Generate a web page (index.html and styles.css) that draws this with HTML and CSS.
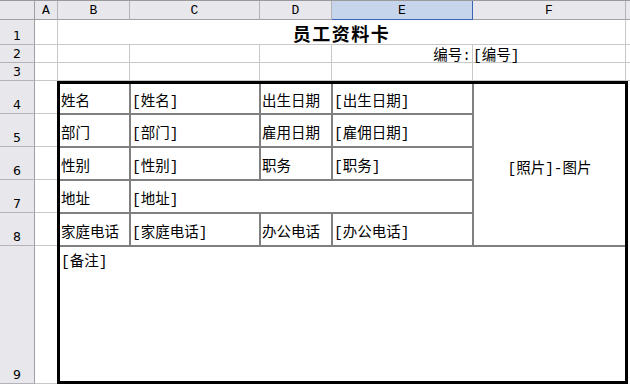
FILE: index.html
```html
<!DOCTYPE html>
<html lang="zh-CN">
<head>
<meta charset="utf-8">
<title>员工资料卡</title>
<link rel="stylesheet" href="styles.css">
</head>
<body>
<div class="sheet">
  <div class="corner"></div>
  <div class="colh">A</div>
  <div class="colh">B</div>
  <div class="colh">C</div>
  <div class="colh">D</div>
  <div class="colh sel">E</div>
  <div class="colh">F</div>
  <div class="colh last"></div>

  <div class="rowh">1</div>
  <div class="cell"></div>
  <div class="cell title">员工资料卡</div>
  <div class="cell edge"></div>

  <div class="rowh">2</div>
  <div class="cell"></div>
  <div class="cell"></div>
  <div class="cell"></div>
  <div class="cell"></div>
  <div class="cell right">编号:</div>
  <div class="cell left">[编号]</div>
  <div class="cell edge"></div>

  <div class="rowh">3</div>
  <div class="cell"></div>
  <div class="cell"></div>
  <div class="cell"></div>
  <div class="cell"></div>
  <div class="cell"></div>
  <div class="cell"></div>
  <div class="cell edge"></div>

  <div class="rowh r4">4</div>
  <div class="rowh r5">5</div>
  <div class="rowh r6">6</div>
  <div class="rowh r7">7</div>
  <div class="rowh r8">8</div>
  <div class="rowh r9">9</div>
  <div class="cell cola r4"></div>
  <div class="cell cola r5"></div>
  <div class="cell cola r6"></div>
  <div class="cell cola r7"></div>
  <div class="cell cola r8"></div>
  <div class="cell cola r9"></div>

  <div class="card">
    <div class="fc">姓名</div>
    <div class="fc">[姓名]</div>
    <div class="fc">出生日期</div>
    <div class="fc">[出生日期]</div>
    <div class="fc photo">[照片]-图片</div>

    <div class="fc">部门</div>
    <div class="fc">[部门]</div>
    <div class="fc">雇用日期</div>
    <div class="fc">[雇佣日期]</div>

    <div class="fc">性别</div>
    <div class="fc">[性别]</div>
    <div class="fc">职务</div>
    <div class="fc">[职务]</div>

    <div class="fc">地址</div>
    <div class="fc addr">[地址]</div>

    <div class="fc">家庭电话</div>
    <div class="fc">[家庭电话]</div>
    <div class="fc">办公电话</div>
    <div class="fc">[办公电话]</div>

    <div class="fc note">[备注]</div>
  </div>
</div>
</body>
</html>
```

FILE: styles.css
```css
* { box-sizing: border-box; }
html, body { margin: 0; padding: 0; background: #ffffff; }
body {
  font-family: "Liberation Mono", "Noto Sans CJK SC", monospace;
  font-size: 14.5px;
  color: #000;
}
.sheet {
  width: 630px;
  height: 384px;
  overflow: hidden;
  display: grid;
  grid-template-columns: 35px 23px 72px 130px 72px 141px 153px 1fr;
  grid-template-rows: 19px 25px 18px 18px repeat(5, 33px) 1fr;
  border-top: 1px solid #9a9a9a;
}
.corner, .colh, .rowh {
  background: #e8e8ec;
  font-family: "Liberation Mono", monospace;
  font-size: 13px;
  color: #000;
}
.rowh { font-family: "DejaVu Sans", sans-serif; font-size: 12.5px; }
.corner {
  border-right: 1px solid #a0a0a4;
  border-bottom: 1px solid #a0a0a4;
}
.colh {
  display: flex;
  align-items: center;
  justify-content: center;
  border-right: 1px solid #b4b4b8;
  border-bottom: 1px solid #a0a0a4;
}
.colh.sel {
  background: #c6d5ec;
  border-right: 1px solid #3b63b8;
  border-bottom: 1px solid #3b63b8;
}
.colh.last { border-right: none; }
.rowh {
  display: flex;
  align-items: flex-end;
  justify-content: center;
  padding-bottom: 1px;
  border-right: 1px solid #a0a0a4;
  border-bottom: 1px solid #b4b4b8;
  grid-column: 1;
}
.cell {
  border-right: 1px solid #c8c8c8;
  border-bottom: 1px solid #c8c8c8;
  display: flex;
  align-items: center;
  white-space: nowrap;
  padding: 0 2px;
}
.cell.edge { border-right: none; }
.title {
  grid-column: 3 / 8;
  justify-content: center;
  font-family: "Noto Sans CJK SC", sans-serif;
  font-weight: bold;
  font-size: 18px;
  letter-spacing: 1.5px;
  padding-top: 1px;
}
.right { justify-content: flex-end; padding-right: 1px; }
.left { justify-content: flex-start; padding-left: 0; }
.cola { grid-column: 2; }
.r4 { grid-row: 5; }
.r5 { grid-row: 6; }
.r6 { grid-row: 7; }
.r7 { grid-row: 8; }
.r8 { grid-row: 9; }
.r9 { grid-row: 10; }

.card {
  grid-column: 3 / 8;
  grid-row: 5 / 11;
  margin: 0 -2px 0 -1px;
  border: 3px solid #000;
  background: #808080;
  display: grid;
  grid-template-columns: 69px 128px 70px 139px 1fr;
  grid-template-rows: 29px repeat(4, 31px) 1fr;
  gap: 2px;
}
.fc {
  background: #ffffff;
  display: flex;
  align-items: center;
  padding: 2px 1px 0 1px;
  white-space: nowrap;
}
.photo {
  grid-column: 5;
  grid-row: 1 / 6;
  justify-content: center;
  padding-top: 3px;
}
.addr { grid-column: 2 / 5; }
.note {
  grid-column: 1 / 6;
  align-items: flex-start;
  padding-top: 2px;
}
```
